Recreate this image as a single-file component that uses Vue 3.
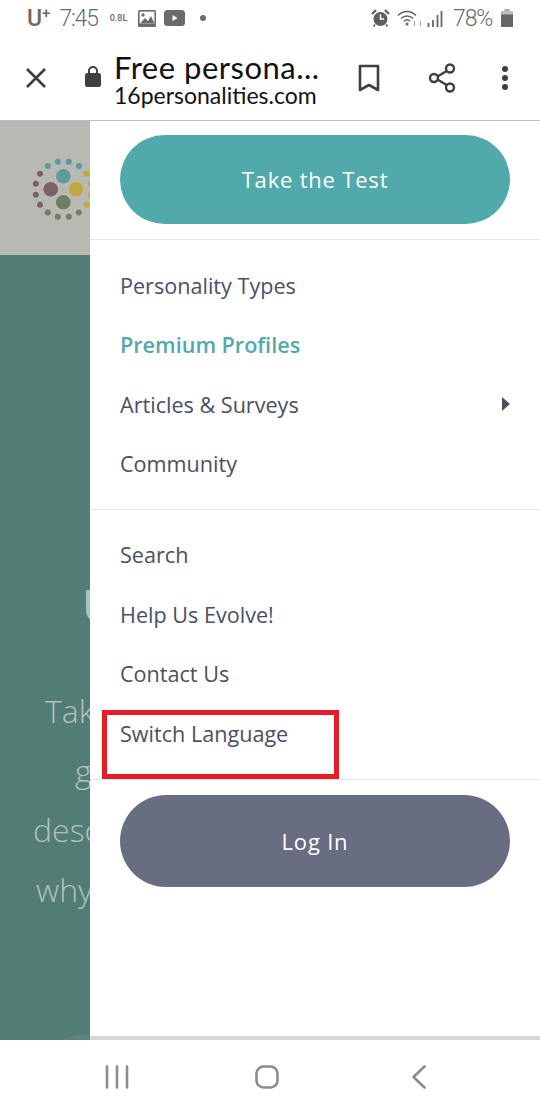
<template>
  <div class="phone">
    <div class="status-bar">
      <div class="status-left">
        <span class="carrier">U<sup>+</sup></span>
        <span class="clock">7:45</span>
        <span class="speed">0.8L</span>
        <svg class="st-icon" width="18" height="17" viewBox="0 0 18 17">
          <rect width="18" height="17" rx="1.5" fill="#6a6a6a" />
          <rect x="1.6" y="1.6" width="14.8" height="12" fill="#fff" />
          <circle cx="5" cy="5" r="1.7" fill="#6a6a6a" />
          <path d="M2 13.6 7 8l3 3 3-5 3.4 7.6z" fill="#6a6a6a" />
        </svg>
        <svg class="st-icon video-icon" width="21" height="16" viewBox="0 0 21 16">
          <rect width="21" height="16" rx="3.5" fill="#6a6a6a" />
          <path d="M8.5 5v6l5-3z" fill="#fff" />
        </svg>
        <span class="st-dot"></span>
      </div>
      <div class="status-right">
        <svg width="19" height="18" viewBox="0 0 19 18">
          <circle cx="9.5" cy="10" r="7" fill="#5f5f5f" />
          <path d="M9.5 5.5V10h3.5" fill="none" stroke="#fff" stroke-width="1.5" />
          <path d="M1 5 5 1M18 5l-4-4" stroke="#5f5f5f" stroke-width="2.4" />
          <path d="M4 15.5 2.5 17.5M15 15.5l1.5 2" stroke="#5f5f5f" stroke-width="1.6" />
        </svg>
        <svg class="wifi" width="26" height="18" viewBox="0 0 26 18">
          <path d="M1 6.5C6 1 14 1 19 6.5M4 9.5c3.5-3.5 8.5-3.5 12 0M7 12.3c2-2 4-2 6 0" fill="none" stroke="#666" stroke-width="1.5" />
          <circle cx="10" cy="15" r="1.5" fill="#666" />
          <path d="M17.5 12v5M23.5 17v-5" stroke="#aaa" stroke-width="1.2" />
        </svg>
        <svg width="16" height="17" viewBox="0 0 16 17">
          <path d="M1.5 13v4M6 10v7M10.5 5v12M14.5 1v16" stroke="#666" stroke-width="1.8" />
        </svg>
        <span class="battery-text">78%</span>
        <svg width="12" height="18" viewBox="0 0 12 18">
          <rect x="3.5" y="0" width="5" height="2" fill="#aaa" />
          <rect x="0" y="2" width="12" height="16" fill="#bbb" />
          <rect x="0" y="5.5" width="12" height="12.5" fill="#666" />
        </svg>
      </div>
    </div>

    <div class="toolbar">
      <svg width="22" height="22" viewBox="0 0 22 22">
        <path d="M2 2l18 18M20 2 2 20" stroke="#3c4043" stroke-width="2.6" />
      </svg>
      <svg class="lock-icon" width="16" height="22" viewBox="0 0 16 22">
        <path d="M4 9V6a4 4 0 0 1 8 0v3" fill="none" stroke="#3c4043" stroke-width="2" />
        <rect y="8" width="16" height="14" rx="2.5" fill="#3c4043" />
      </svg>
      <div class="page-info">
        <div class="page-title">Free persona...</div>
        <div class="page-url">16personalities.com</div>
      </div>
      <div class="toolbar-actions">
        <svg width="22" height="28" viewBox="0 0 22 28">
          <path d="M2 2h18v24l-9-5-9 5z" fill="none" stroke="#3c4043" stroke-width="2.6" stroke-linejoin="round" />
        </svg>
        <svg class="share-icon" width="28" height="30" viewBox="0 0 28 30">
          <path d="M7 15 22 6M7 15l15 9" stroke="#3c4043" stroke-width="2.4" />
          <circle cx="6" cy="15" r="4" fill="#fff" stroke="#3c4043" stroke-width="2.4" />
          <circle cx="22" cy="5.5" r="4" fill="#fff" stroke="#3c4043" stroke-width="2.4" />
          <circle cx="22" cy="24.5" r="4" fill="#fff" stroke="#3c4043" stroke-width="2.4" />
        </svg>
        <div class="more-dots"><i></i><i></i><i></i></div>
      </div>
    </div>

    <div class="content">
      <div class="backdrop">
        <div class="backdrop-head">
          <svg class="logo" width="90" height="134" viewBox="0 0 90 134">
            <circle v-for="(d, i) in ringDots" :key="i" :cx="d.x" :cy="d.y" r="3" :fill="d.color" />
            <circle cx="63.3" cy="55.3" r="7.3" fill="#5f9a9a" />
            <circle cx="50.7" cy="68.3" r="7.3" fill="#7a6068" />
            <circle cx="76" cy="68.3" r="7.3" fill="#bfa83f" />
            <circle cx="63.3" cy="81.3" r="7.3" fill="#6f8060" />
          </svg>
        </div>
        <div class="backdrop-hero">
          <div class="hero-title">U</div>
          <div class="hero-line line-1">Take</div>
          <div class="hero-line line-2">get</div>
          <div class="hero-line line-3">describe</div>
          <div class="hero-line line-4">why</div>
          <div class="hero-curve"></div>
        </div>
      </div>

      <nav class="drawer">
        <div class="drawer-cta">
          <button class="pill pill-teal">Take the Test</button>
        </div>
        <ul class="menu menu-main">
          <li v-for="item in mainLinks" :key="item.label" :class="{ active: item.active }">
            <span>{{ item.label }}</span>
            <i v-if="item.arrow" class="arrow"></i>
          </li>
        </ul>
        <ul class="menu menu-sub">
          <li v-for="label in subLinks" :key="label"><span>{{ label }}</span></li>
        </ul>
        <div class="drawer-login">
          <button class="pill pill-slate">Log In</button>
        </div>
      </nav>

      <div class="highlight"></div>
    </div>

    <div class="nav-bar">
      <svg width="24" height="24" viewBox="0 0 24 24">
        <path d="M2 1.5v21M12 1.5v21M22 1.5v21" stroke="#8c8c8c" stroke-width="2.6" stroke-linecap="round" />
      </svg>
      <svg class="home-icon" width="24" height="24" viewBox="0 0 24 24">
        <rect x="1.5" y="1.5" width="21" height="21" rx="7" fill="none" stroke="#8c8c8c" stroke-width="2.6" />
      </svg>
      <svg class="back-icon" width="14" height="24" viewBox="0 0 14 24">
        <path d="M12.5 1.5 1.5 12l11 10.5" fill="none" stroke="#8c8c8c" stroke-width="2.6" stroke-linecap="round" stroke-linejoin="round" />
      </svg>
    </div>
  </div>
</template>

<script setup>
const mainLinks = [
  { label: 'Personality Types' },
  { label: 'Premium Profiles', active: true },
  { label: 'Articles & Surveys', arrow: true },
  { label: 'Community' },
];
const subLinks = ['Search', 'Help Us Evolve!', 'Contact Us', 'Switch Language'];

// 16 dots round the logo, four of each colour
const ringColors = ['#5f9a9a', '#bfa83f', '#6f8060', '#7a6068'];
const ringDots = Array.from({ length: 16 }, (_, i) => {
  const angle = ((i * 22.5 - 33.75) * Math.PI) / 180;
  return {
    x: 63.3 + 28 * Math.sin(angle),
    y: 68.3 - 28 * Math.cos(angle),
    color: ringColors[Math.floor(i / 4)],
  };
});
</script>

<style>
html, body {
  margin: 0;
  background: #fff;
}
</style>

<style scoped>
.phone {
  width: 540px;
  height: 1110px;
  display: flex;
  flex-direction: column;
  overflow: hidden;
  background: #fff;
  font-family: "Open Sans", "Liberation Sans", sans-serif;
}

.status-bar {
  height: 36px;
  flex-shrink: 0;
  display: flex;
  align-items: center;
  justify-content: space-between;
  padding: 0 27px;
  color: #6a6a6a;
  font-family: Roboto, "Liberation Sans", sans-serif;
}
.status-left,
.status-right {
  display: flex;
  align-items: center;
}
.carrier {
  font-size: 23px;
  font-weight: 500;
  line-height: 1;
}
.carrier sup {
  font-size: 15px;
  line-height: 0;
  vertical-align: 8px;
}
.clock {
  font-size: 23px;
  font-weight: 300;
  letter-spacing: -1.2px;
  margin-left: 9px;
}
.speed {
  font-size: 9px;
  font-weight: 500;
  margin-left: 12px;
}
.st-icon {
  margin-left: 11px;
}
.video-icon {
  margin-left: 8px;
}
.st-dot {
  width: 6px;
  height: 6px;
  border-radius: 50%;
  background: #6a6a6a;
  margin-left: 15px;
}
.status-right {
  gap: 4px;
}
.wifi {
  margin-left: 3px;
}
.battery-text {
  font-size: 23px;
  font-weight: 300;
  letter-spacing: -1.2px;
  margin: 0 5px 0 6px;
}

.toolbar {
  height: 85px;
  flex-shrink: 0;
  box-sizing: border-box;
  border-bottom: 1px solid #bdbdbd;
  display: flex;
  align-items: center;
  padding: 0 32px 0 25px;
}
.lock-icon {
  margin-left: 38px;
  margin-bottom: 4px;
}
.page-info {
  margin-left: 13px;
  padding-top: 4px;
  width: 225px;
  white-space: nowrap;
  font-family: Lato, "Liberation Sans", sans-serif;
  color: #111;
}
.page-title {
  font-size: 31px;
  line-height: 31px;
  letter-spacing: 0.5px;
}
.page-url {
  font-size: 23px;
  line-height: 25px;
}
.toolbar-actions {
  flex: 1;
  display: flex;
  align-items: center;
  justify-content: space-between;
  padding-left: 19px;
}
.share-icon {
  margin-left: 1px;
}
.more-dots {
  display: flex;
  flex-direction: column;
  gap: 3px;
}
.more-dots i {
  width: 6px;
  height: 6px;
  border-radius: 50%;
  background: #3c4043;
}

.content {
  flex: 1;
  min-height: 0;
  position: relative;
  display: flex;
}
.backdrop {
  width: 90px;
  flex-shrink: 0;
  display: flex;
  flex-direction: column;
  overflow: hidden;
}
.backdrop-head {
  height: 134px;
  flex-shrink: 0;
  background: #b9b9b3;
}
.logo {
  display: block;
}
.backdrop-hero {
  flex: 1;
  background: #527d75;
  color: #b1c2bc;
  white-space: nowrap;
  font-weight: 300;
  padding-top: 317px;
  position: relative;
}
.hero-title {
  font-size: 46px;
  line-height: 64px;
  font-weight: 600;
  margin-left: 82px;
}
.hero-line {
  font-size: 32px;
  line-height: 59.5px;
}
.line-1 {
  margin-top: 45px;
  margin-left: 45px;
}
.line-2 {
  margin-left: 75px;
}
.line-3 {
  margin-left: 33px;
}
.line-4 {
  margin-left: 36px;
}
.hero-curve {
  position: absolute;
  left: 58px;
  bottom: -22px;
  width: 62px;
  height: 28px;
  border-radius: 50%;
  background: rgba(255, 255, 255, 0.06);
}

.drawer {
  flex: 1;
  background: #fff;
  border-bottom: 4px solid #d8d8d8;
  color: #4a5062;
}
.drawer-cta {
  padding: 14px 30px 15px;
  border-bottom: 1px solid #e6e6e6;
}
.pill {
  display: block;
  width: 100%;
  border: none;
  color: #fff;
  font-family: inherit;
  font-size: 22px;
  letter-spacing: 0.8px;
  padding: 0;
}
.pill-teal {
  height: 89px;
  border-radius: 45px;
  background: #52a9ab;
  padding-bottom: 2px;
}
.pill-slate {
  height: 92px;
  border-radius: 46px;
  background: #696d82;
}
.menu {
  list-style: none;
  margin: 0;
  padding: 15px 30px 16px;
  border-bottom: 1px solid #e6e6e6;
  font-size: 21.6px;
}
.menu-main {
  padding-top: 15.4px;
  padding-bottom: 15.6px;
}
.menu li {
  height: 59.5px;
  display: flex;
  align-items: center;
  justify-content: space-between;
}
.menu li.active {
  color: #52a9ab;
  font-weight: 600;
}
.arrow {
  width: 0;
  height: 0;
  border-left: 8px solid #4a5062;
  border-top: 7px solid transparent;
  border-bottom: 7px solid transparent;
}
.drawer-login {
  padding: 15px 30px;
}

.highlight {
  position: absolute;
  left: 102px;
  top: 589px;
  width: 237px;
  height: 69px;
  box-sizing: border-box;
  border: 5px solid #e81c27;
}

.nav-bar {
  height: 70px;
  flex-shrink: 0;
  display: flex;
  align-items: center;
  padding: 3px 0 0 105px;
  box-sizing: border-box;
}
.home-icon {
  margin-left: 126px;
}
.back-icon {
  margin-left: 133px;
}
</style>
